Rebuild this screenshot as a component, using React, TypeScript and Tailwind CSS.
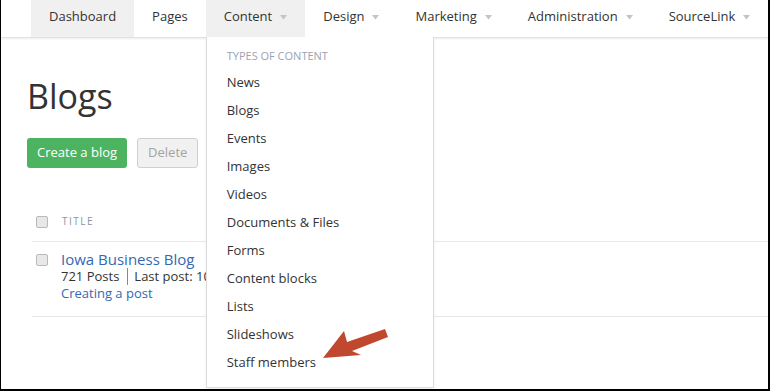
const navItems = [
    { label: 'Dashboard', caret: false, shaded: true },
    { label: 'Pages', caret: false, shaded: false },
    { label: 'Content', caret: true, shaded: true, open: true },
    { label: 'Design', caret: true, shaded: false },
    { label: 'Marketing', caret: true, shaded: false },
    { label: 'Administration', caret: true, shaded: false },
    { label: 'SourceLink', caret: true, shaded: false },
];

const contentTypes = [
    'News',
    'Blogs',
    'Events',
    'Images',
    'Videos',
    'Documents & Files',
    'Forms',
    'Content blocks',
    'Lists',
    'Slideshows',
    'Staff members',
];

function Caret() {
    return (
        <svg width="7" height="5" viewBox="0 0 7 5" className="ml-[8px] mt-[1px]">
            <path d="M0 0 L7 0 L3.5 4.5 Z" fill="#c4c4c4" />
        </svg>
    );
}

function Checkbox({ className = '' }: { className?: string }) {
    return (
        <span
            className={
                'block h-[12px] w-[12px] shrink-0 rounded-[2px] border border-[#b9b9b9] bg-[#e8e8e8] ' +
                className
            }
        />
    );
}

function ContentMenu() {
    return (
        <div className="absolute left-0 top-full z-10 w-[228px] border border-t-0 border-[#dcdcdc] bg-white pb-[10px] pt-[11px] shadow-[0_2px_4px_rgba(0,0,0,0.06)]">
            <div className="mb-[5px] flex h-[16px] items-center pl-[20px] text-[11px] uppercase text-[#9ba3b3]">
                Types of content
            </div>
            {contentTypes.map((t) => (
                <div
                    key={t}
                    className="flex h-[28px] items-center pl-[20px] text-[13px] text-[#333]"
                >
                    {t}
                </div>
            ))}
        </div>
    );
}

export default function App() {
    return (
        <div className="relative h-[391px] w-[770px] overflow-hidden border-b-2 border-l border-r-2 border-black bg-white font-['Open_Sans',sans-serif] text-[#333]">
            {/* top navigation */}
            <nav className="relative z-20 flex h-[38px] border-b border-[#e2e2e2] bg-white pl-[30px] shadow-[0_1px_2px_rgba(0,0,0,0.08)]">
                {navItems.map((item) => (
                    <div
                        key={item.label}
                        className={
                            'relative flex h-[37px] items-center px-[18px] pb-[3px] text-[13px] ' +
                            (item.shaded ? 'bg-[#f0f0f0]' : '')
                        }
                    >
                        {item.label}
                        {item.caret && <Caret />}
                        {item.open && <ContentMenu />}
                    </div>
                ))}
            </nav>

            <main className="pl-[26px] pt-[38px]">
                <h1 className="text-[34px] leading-[40px] text-[#333]">Blogs</h1>

                <div className="mt-[22px] flex gap-[10px]">
                    <button className="h-[30px] rounded-[3px] bg-[#4cb461] px-[10px] text-[13px] text-white">
                        Create a blog
                    </button>
                    <button className="h-[30px] rounded-[3px] border border-[#cfcfcf] bg-[#f1f1f1] px-[10px] text-[13px] text-[#a3a3a3]">
                        Delete
                    </button>
                </div>

                {/* list table */}
                <div className="ml-[5px] mt-[34px]">
                    <div className="flex h-[40px] items-center gap-[14px] border-b border-[#e8e8e8] pl-[4px]">
                        <Checkbox />
                        <span className="text-[10px] tracking-[1.5px] text-[#8b93a1]">TITLE</span>
                    </div>
                    <div className="flex h-[75px] gap-[13px] border-b border-[#e8e8e8] pl-[4px] pt-[8px]">
                        <Checkbox className="mt-[4px]" />
                        <div>
                            <div className="text-[15px] leading-[18px] text-[#3369b3]">
                                Iowa Business Blog
                            </div>
                            <div className="flex items-center text-[13px] leading-[17px]">
                                <span>721 Posts</span>
                                <span className="ml-[8px] mr-[6px] h-[17px] w-px bg-[#888]" />
                                <span>Last post: 10/12/2015</span>
                            </div>
                            <div className="text-[13px] leading-[17px] text-[#3369b3]">
                                Creating a post
                            </div>
                        </div>
                    </div>
                </div>
            </main>

            {/* annotation arrow */}
            <svg
                className="absolute left-[318px] top-[326px] z-30"
                width="72"
                height="38"
                viewBox="0 0 72 38"
            >
                <path d="M66 3 L69 11 L33 25 L42 29 L4 32 L25 5 L28 16 Z" fill="#c0482e" />
            </svg>
        </div>
    );
}
